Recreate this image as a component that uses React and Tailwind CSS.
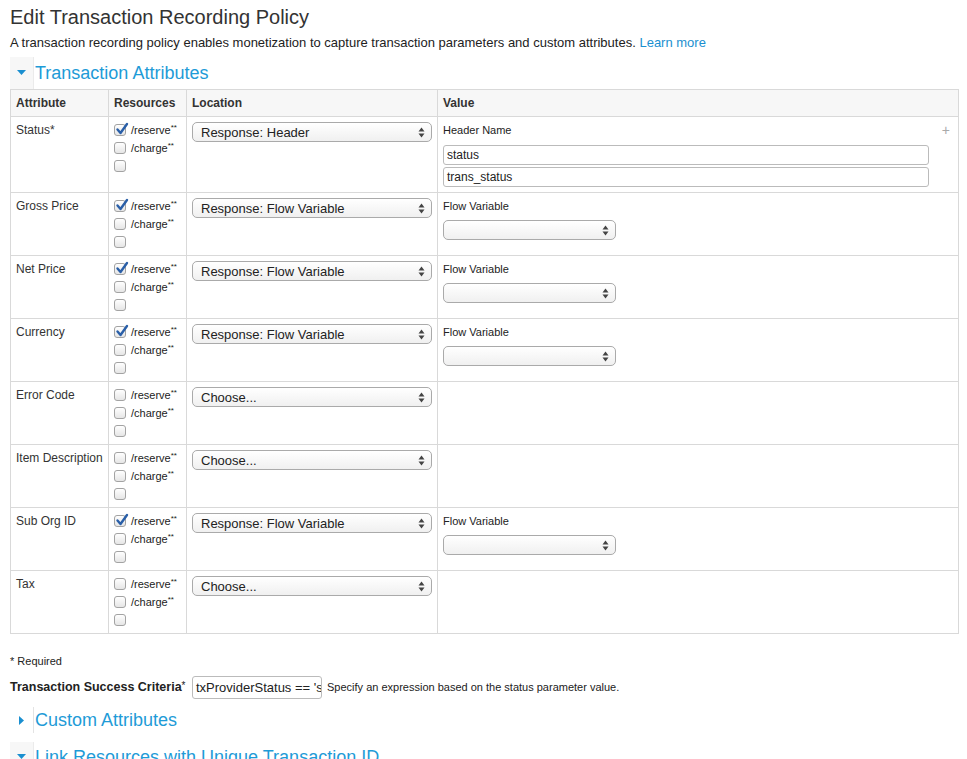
import React from "react";

const rows = [
  { name: "Status*", checked: true, loc: "Response: Header", value: "header", h: 76 },
  { name: "Gross Price", checked: true, loc: "Response: Flow Variable", value: "flow", h: 63 },
  { name: "Net Price", checked: true, loc: "Response: Flow Variable", value: "flow", h: 63 },
  { name: "Currency", checked: true, loc: "Response: Flow Variable", value: "flow", h: 63 },
  { name: "Error Code", checked: false, loc: "Choose...", value: null, h: 63 },
  { name: "Item Description", checked: false, loc: "Choose...", value: null, h: 63 },
  { name: "Sub Org ID", checked: true, loc: "Response: Flow Variable", value: "flow", h: 63 },
  { name: "Tax", checked: false, loc: "Choose...", value: null, h: 63 },
];

function Checkbox({ checked }) {
  return (
    <span className="relative inline-block w-[12px] h-[12px] rounded-[3px] border border-[#a3a3a3] bg-gradient-to-b from-white to-[#e6e6e6] shrink-0">
      {checked && (
        <svg className="absolute left-[0px] top-[-3px]" width="14" height="14" viewBox="0 0 14 14">
          <path d="M2.5 7.5 L5.5 11 L12 2" fill="none" stroke="#2a5fa8" strokeWidth="2.4" strokeLinecap="round" strokeLinejoin="round" />
        </svg>
      )}
    </span>
  );
}

function Arrows() {
  return (
    <svg width="7" height="11" viewBox="0 0 7 11" className="shrink-0">
      <path d="M3.5 0.5 L6.5 4.5 L0.5 4.5 Z" fill="#444" />
      <path d="M3.5 10.5 L6.5 6.5 L0.5 6.5 Z" fill="#444" />
    </svg>
  );
}

function Select({ text, w }) {
  return (
    <div
      className={`flex items-center justify-between h-[20px] rounded-[5px] border border-[#aaa] bg-gradient-to-b from-white to-[#f0f0f0] pl-[8px] pr-[6px] text-[13px] text-[#222] ${w}`}
    >
      <span className="leading-none">{text}</span>
      <Arrows />
    </div>
  );
}

function Resource({ checked, label }) {
  return (
    <div className="flex items-center gap-[5px] h-[18px]">
      <Checkbox checked={checked} />
      {label && (
        <span className="text-[11px] text-[#222] leading-none">
          {label}
          <span className="text-[8px] align-top relative top-[-1px]">**</span>
        </span>
      )}
    </div>
  );
}

export default function App() {
  const font = { fontFamily: '"Liberation Sans", Arial, sans-serif' };
  return (
    <div className="bg-white min-h-[759px] px-[10px] text-[#333]" style={font}>
      <h1 className="text-[20px] leading-[24px] pt-[5px] text-[#333] font-normal">Edit Transaction Recording Policy</h1>
      <p className="text-[13px] leading-[16px] mt-[6px] text-[#222]">
        A transaction recording policy enables monetization to capture transaction parameters and custom attributes.{" "}
        <span className="text-[#1a8fd0]">Learn more</span>
      </p>

      <div className="flex items-stretch h-[32px] mt-[6px]">
        <div className="w-[24px] bg-[#f7f7f7] border-r border-[#ebebeb] flex items-center justify-center">
          <svg width="9" height="6" viewBox="0 0 9 6"><path d="M0 0 L9 0 L4.5 5 Z" fill="#1a8fd0" /></svg>
        </div>
        <div className="flex items-center pl-[1px] text-[18px] text-[#1e9bd7]">Transaction Attributes</div>
      </div>

      <table className="w-[949px] border-collapse border border-[#d4d4d4] table-fixed">
        <colgroup>
          <col style={{ width: 98 }} />
          <col style={{ width: 78 }} />
          <col style={{ width: 251 }} />
          <col />
        </colgroup>
        <thead>
          <tr className="bg-[#f7f7f7]" style={{ height: 27 }}>
            {["Attribute", "Resources", "Location", "Value"].map((h) => (
              <th key={h} className="border border-[#d9d9d9] text-left font-bold text-[12px] text-[#333] px-[5px] align-middle">
                {h}
              </th>
            ))}
          </tr>
        </thead>
        <tbody>
          {rows.map((r) => (
            <tr key={r.name} style={{ height: r.h }}>
              <td className="border border-[#d9d9d9] align-top px-[5px] pt-[6px] text-[12px] text-[#333] leading-[14px]">{r.name}</td>
              <td className="border border-[#d9d9d9] align-top px-[5px] pt-[4px]">
                <Resource checked={r.checked} label="/reserve" />
                <Resource checked={false} label="/charge" />
                <Resource checked={false} />
              </td>
              <td className="border border-[#d9d9d9] align-top px-[5px] pt-[5px]">
                <Select text={r.loc} w="w-[240px]" />
              </td>
              <td className="border border-[#d9d9d9] align-top px-[5px] pt-[6px] relative">
                {r.value === "header" && (
                  <div>
                    <div className="text-[11px] leading-[14px] text-[#222]">Header Name</div>
                    <span className="absolute right-[8px] top-[6px] text-[14px] leading-none text-[#aaa]">+</span>
                    <div className="mt-[8px] w-[486px] h-[20px] border border-[#bbb] rounded-[3px] text-[12px] px-[3px] flex items-center text-[#222]">status</div>
                    <div className="mt-[2px] w-[486px] h-[20px] border border-[#bbb] rounded-[3px] text-[12px] px-[3px] flex items-center text-[#222]">trans_status</div>
                  </div>
                )}
                {r.value === "flow" && (
                  <div>
                    <div className="text-[11px] leading-[14px] text-[#222]">Flow Variable</div>
                    <div className="mt-[7px]">
                      <Select text="" w="w-[173px]" />
                    </div>
                  </div>
                )}
              </td>
            </tr>
          ))}
        </tbody>
      </table>

      <div className="mt-[21px] text-[11px] leading-[13px] text-[#222]">* Required</div>

      <div className="flex items-center mt-[8px] h-[23px]">
        <span className="text-[12.5px] font-bold text-[#222] w-[182px] shrink-0 whitespace-nowrap">
          Transaction Success Criteria<span className="font-normal text-[10px] align-top">*</span>
        </span>
        <div className="w-[130px] h-[23px] border border-[#bbb] rounded-[3px] overflow-hidden whitespace-nowrap text-[13px] px-[3px] flex items-center text-[#222] shrink-0">
          <span className="whitespace-nowrap">txProviderStatus == 'success'</span>
        </div>
        <span className="ml-[5px] text-[11px] text-[#222] whitespace-nowrap">Specify an expression based on the status parameter value.</span>
      </div>

      <div className="flex items-stretch h-[26px] mt-[8px]">
        <div className="w-[24px] border-r border-[#e3e3e3] flex items-center justify-center">
          <svg width="6" height="9" viewBox="0 0 6 9"><path d="M0 0 L5 4.5 L0 9 Z" fill="#1a8fd0" /></svg>
        </div>
        <div className="flex items-center pl-[1px] text-[18px] text-[#1e9bd7]">Custom Attributes</div>
      </div>

      <div className="flex items-stretch h-[30px] mt-[9px]">
        <div className="w-[24px] bg-[#f7f7f7] border-r border-[#ebebeb] flex items-center justify-center">
          <svg width="9" height="6" viewBox="0 0 9 6"><path d="M0 0 L9 0 L4.5 5 Z" fill="#1a8fd0" /></svg>
        </div>
        <div className="flex items-center pl-[1px] text-[18px] text-[#1e9bd7]">Link Resources with Unique Transaction ID</div>
      </div>
    </div>
  );
}
